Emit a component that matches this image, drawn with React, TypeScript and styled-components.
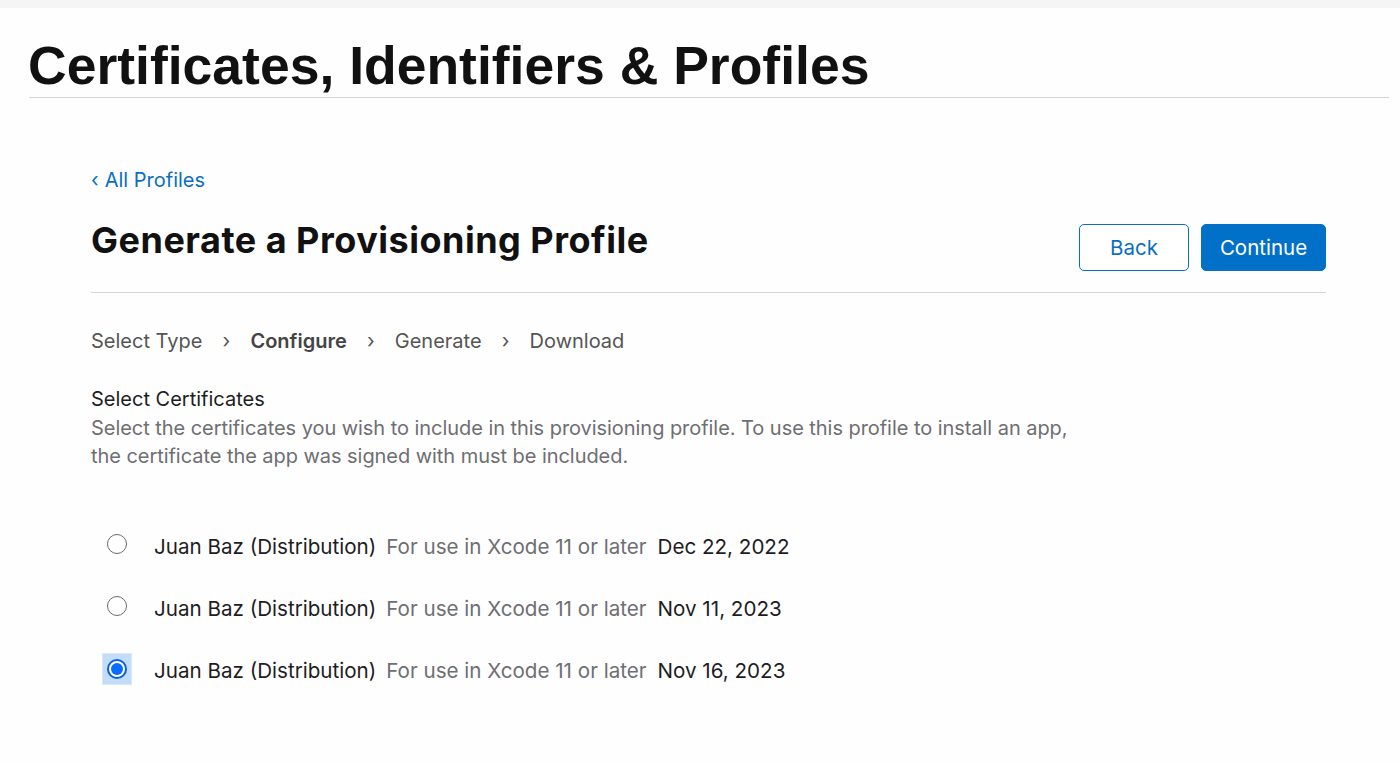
import React from "react";
import styled, { createGlobalStyle } from "styled-components";

const GlobalStyle = createGlobalStyle`
  html, body { margin: 0; padding: 0; background: #fefefe; }
  body { font-family: Inter, "Noto Sans", sans-serif; color: #1d1d1f; -webkit-font-smoothing: antialiased; }
`;

const Page = styled.div`
  width: 1400px;
  min-height: 763px;
  display: flex;
  flex-direction: column;
`;

const TopStrip = styled.div`
  height: 8px;
  background: #f5f5f6;
`;

const Header = styled.header`
  margin: 0 11px 0 29px;
  height: 89px;
  border-bottom: 1px solid #d6d6d9;
  display: flex;
  align-items: flex-end;
`;

const SiteTitle = styled.h1`
  margin: 0 0 1px -1px;
  font-family: "Liberation Sans", Arial, sans-serif;
  font-weight: 700;
  font-size: 53.5px;
  line-height: 60px;
  letter-spacing: 0;
  color: #111;
`;

const Main = styled.main`
  margin-left: 91px;
  width: 1235px;
  display: flex;
  flex-direction: column;
`;

const BackLink = styled.a`
  margin-top: 68px;
  font-size: 20px;
  line-height: 28px;
  color: #0a6fc2;
  text-decoration: none;
  display: flex;
  align-items: center;
  gap: 6px;
`;

const Chevron = styled.span`
  font-size: 20px;
`;

const TitleRow = styled.div`
  margin-top: 23px;
  display: flex;
  justify-content: space-between;
  align-items: flex-end;
  padding-bottom: 21px;
  border-bottom: 1px solid #d6d6d9;
`;

const PageTitle = styled.h2`
  margin: 0 0 8px;
  font-size: 36px;
  line-height: 46px;
  font-weight: 700;
  letter-spacing: 0.5px;
  color: #111;
`;

const Buttons = styled.div`
  display: flex;
  gap: 12px;
`;

const Button = styled.button<{ $primary?: boolean }>`
  height: 47px;
  border-radius: 5px;
  font-family: inherit;
  font-size: 20.5px;
  padding: 0;
  width: ${(p) => (p.$primary ? "125px" : "110px")};
  border: 1.5px solid #0a6fc2;
  background: ${(p) => (p.$primary ? "#0070c9" : "#fff")};
  color: ${(p) => (p.$primary ? "#fff" : "#0a6fc2")};
  cursor: pointer;
`;

const Steps = styled.ol`
  list-style: none;
  margin: 34px 0 0;
  padding: 0;
  display: flex;
  align-items: center;
  font-size: 20px;
  line-height: 28px;
  color: #555;
`;

const Step = styled.li<{ $active?: boolean }>`
  font-weight: ${(p) => (p.$active ? 600 : 400)};
  color: ${(p) => (p.$active ? "#444" : "#555")};
`;

const StepSep = styled.li`
  width: 48px;
  display: flex;
  justify-content: center;
  color: #555;
`;

const Section = styled.section`
  margin-top: 30px;
`;

const SectionTitle = styled.h3`
  margin: 0;
  font-size: 20px;
  line-height: 28px;
  font-weight: 400;
  color: #1d1d1f;
`;

const SectionDesc = styled.p`
  margin: 1px 0 0;
  max-width: 1000px;
  font-size: 20px;
  line-height: 28px;
  letter-spacing: -0.05px;
  color: #6e6e73;
`;

const RadioList = styled.div`
  margin-top: 63px;
  display: flex;
  flex-direction: column;
  gap: 34px;
`;

const RadioRow = styled.label`
  display: flex;
  align-items: center;
  height: 28px;
  font-size: 20.6px;
  line-height: 28px;
`;

const RadioBox = styled.span<{ $focus?: boolean }>`
  width: 30px;
  height: 32px;
  margin-left: 11px;
  margin-right: 22px;
  display: flex;
  align-items: center;
  justify-content: center;
  background: ${(p) => (p.$focus ? "#c3dcf7" : "transparent")};
  box-shadow: ${(p) => (p.$focus ? "inset 0 0 0 1px #d7e8fb" : "none")};
  position: relative;
  top: ${(p) => (p.$focus ? "-2px" : "-3px")};
`;

const Radio = styled.span<{ $checked?: boolean }>`
  width: 20px;
  height: 20px;
  box-sizing: border-box;
  border-radius: 50%;
  border: ${(p) => (p.$checked ? "2px solid #0b5fd8" : "1.5px solid #6b6b6b")};
  background: #fff;
  display: flex;
  align-items: center;
  justify-content: center;
  &::after {
    content: "";
    display: ${(p) => (p.$checked ? "block" : "none")};
    width: 12px;
    height: 12px;
    border-radius: 50%;
    background: #0a6cff;
  }
`;

const CertName = styled.span`
  color: #1d1d1f;
`;

const CertNote = styled.span`
  margin-left: 10px;
  color: #6e6e73;
`;

const CertDate = styled.span`
  margin-left: 11px;
  color: #1d1d1f;
`;

const certs = [
  { date: "Dec 22, 2022", checked: false },
  { date: "Nov 11, 2023", checked: false },
  { date: "Nov 16, 2023", checked: true },
];

export default function App() {
  return (
    <Page>
      <GlobalStyle />
      <TopStrip />
      <Header>
        <SiteTitle>Certificates, Identifiers &amp; Profiles</SiteTitle>
      </Header>
      <Main>
        <BackLink href="#">
          <Chevron>‹</Chevron>All Profiles
        </BackLink>
        <TitleRow>
          <PageTitle>Generate a Provisioning Profile</PageTitle>
          <Buttons>
            <Button>Back</Button>
            <Button $primary>Continue</Button>
          </Buttons>
        </TitleRow>
        <Steps>
          <Step>Select Type</Step>
          <StepSep>›</StepSep>
          <Step $active>Configure</Step>
          <StepSep>›</StepSep>
          <Step>Generate</Step>
          <StepSep>›</StepSep>
          <Step>Download</Step>
        </Steps>
        <Section>
          <SectionTitle>Select Certificates</SectionTitle>
          <SectionDesc>
            Select the certificates you wish to include in this provisioning profile. To use this profile to install an app,
            the certificate the app was signed with must be included.
          </SectionDesc>
        </Section>
        <RadioList>
          {certs.map((c) => (
            <RadioRow key={c.date}>
              <RadioBox $focus={c.checked}>
                <Radio $checked={c.checked} />
              </RadioBox>
              <CertName>Juan Baz (Distribution)</CertName>
              <CertNote>For use in Xcode 11 or later</CertNote>
              <CertDate>{c.date}</CertDate>
            </RadioRow>
          ))}
        </RadioList>
      </Main>
    </Page>
  );
}
